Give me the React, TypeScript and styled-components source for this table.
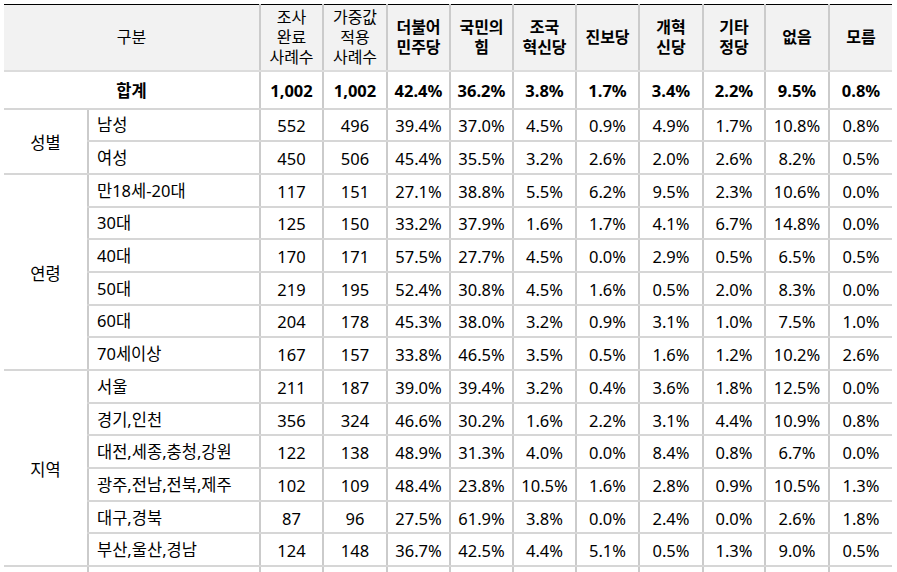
import React from "react";
import styled, { createGlobalStyle } from "styled-components";

const GlobalStyle = createGlobalStyle`
  html, body {
    margin: 0;
    padding: 0;
    background: #ffffff;
  }
  body {
    font-family: "Noto Sans", "Noto Sans CJK KR", sans-serif;
    color: #000000;
  }
`;

const Page = styled.div`
  padding: 4px 5px 0 4px;
`;

const Table = styled.table`
  width: 888px;
  table-layout: fixed;
  border-collapse: collapse;
  border-top: 1px solid #000000;
  font-size: 16.5px;
`;

const HeadRow = styled.tr`
  height: 66px;
  background: #f2f2f2;
`;

const HeadCell = styled.th<{ $bold?: boolean }>`
  font-weight: ${(p) => (p.$bold ? 700 : 400)};
  font-size: 16px;
  line-height: 20px;
  text-align: center;
  padding: 0;
  border-left: 2px solid #cbcbcb;
  border-bottom: 2px solid #dcdcdc;
  &:first-child {
    border-left: none;
  }
`;

const TotalRow = styled.tr`
  height: 38px;
  font-weight: 700;
`;

const BodyRow = styled.tr`
  height: 32.7px;
`;

const GroupCell = styled.td`
  text-align: center;
  padding: 2px 0 0;
  border-bottom: 2px solid #d6d6d6;
`;

const LabelCell = styled.td`
  text-align: left;
  padding: 0 0 1px 8px;
  border-left: 2px solid #cbcbcb;
  border-bottom: 2px solid #d6d6d6;
  white-space: nowrap;
`;

const NumCell = styled.td`
  text-align: center;
  padding: 2px 0 0;
  border-left: 2px solid #cbcbcb;
  border-bottom: 2px solid #d6d6d6;
  white-space: nowrap;
`;

const TotalLabel = styled.td`
  text-align: center;
  padding: 0;
  border-bottom: 2px solid #d6d6d6;
`;

type Row = [string, ...string[]];

const groups: { name: string; rows: Row[] }[] = [
  {
    name: "성별",
    rows: [
      ["남성", "552", "496", "39.4%", "37.0%", "4.5%", "0.9%", "4.9%", "1.7%", "10.8%", "0.8%"],
      ["여성", "450", "506", "45.4%", "35.5%", "3.2%", "2.6%", "2.0%", "2.6%", "8.2%", "0.5%"],
    ],
  },
  {
    name: "연령",
    rows: [
      ["만18세-20대", "117", "151", "27.1%", "38.8%", "5.5%", "6.2%", "9.5%", "2.3%", "10.6%", "0.0%"],
      ["30대", "125", "150", "33.2%", "37.9%", "1.6%", "1.7%", "4.1%", "6.7%", "14.8%", "0.0%"],
      ["40대", "170", "171", "57.5%", "27.7%", "4.5%", "0.0%", "2.9%", "0.5%", "6.5%", "0.5%"],
      ["50대", "219", "195", "52.4%", "30.8%", "4.5%", "1.6%", "0.5%", "2.0%", "8.3%", "0.0%"],
      ["60대", "204", "178", "45.3%", "38.0%", "3.2%", "0.9%", "3.1%", "1.0%", "7.5%", "1.0%"],
      ["70세이상", "167", "157", "33.8%", "46.5%", "3.5%", "0.5%", "1.6%", "1.2%", "10.2%", "2.6%"],
    ],
  },
  {
    name: "지역",
    rows: [
      ["서울", "211", "187", "39.0%", "39.4%", "3.2%", "0.4%", "3.6%", "1.8%", "12.5%", "0.0%"],
      ["경기,인천", "356", "324", "46.6%", "30.2%", "1.6%", "2.2%", "3.1%", "4.4%", "10.9%", "0.8%"],
      ["대전,세종,충청,강원", "122", "138", "48.9%", "31.3%", "4.0%", "0.0%", "8.4%", "0.8%", "6.7%", "0.0%"],
      ["광주,전남,전북,제주", "102", "109", "48.4%", "23.8%", "10.5%", "1.6%", "2.8%", "0.9%", "10.5%", "1.3%"],
      ["대구,경북", "87", "96", "27.5%", "61.9%", "3.8%", "0.0%", "2.4%", "0.0%", "2.6%", "1.8%"],
      ["부산,울산,경남", "124", "148", "36.7%", "42.5%", "4.4%", "5.1%", "0.5%", "1.3%", "9.0%", "0.5%"],
    ],
  },
];

const total = ["1,002", "1,002", "42.4%", "36.2%", "3.8%", "1.7%", "3.4%", "2.2%", "9.5%", "0.8%"];

const widths = [84, 172, 63, 64, 63, 63, 63, 63, 64, 62, 64, 63];

const App = () => {
  return (
    <Page>
      <GlobalStyle />
      <Table>
        <colgroup>
          {widths.map((w, i) => (
            <col key={i} style={{ width: w }} />
          ))}
        </colgroup>
        <thead>
          <HeadRow>
            <HeadCell colSpan={2}>구분</HeadCell>
            <HeadCell>
              조사
              <br />
              완료
              <br />
              사례수
            </HeadCell>
            <HeadCell>
              가중값
              <br />
              적용
              <br />
              사례수
            </HeadCell>
            <HeadCell $bold>
              더불어
              <br />
              민주당
            </HeadCell>
            <HeadCell $bold>
              국민의
              <br />힘
            </HeadCell>
            <HeadCell $bold>
              조국
              <br />
              혁신당
            </HeadCell>
            <HeadCell $bold>진보당</HeadCell>
            <HeadCell $bold>
              개혁
              <br />
              신당
            </HeadCell>
            <HeadCell $bold>
              기타
              <br />
              정당
            </HeadCell>
            <HeadCell $bold>없음</HeadCell>
            <HeadCell $bold>모름</HeadCell>
          </HeadRow>
        </thead>
        <tbody>
          <TotalRow>
            <TotalLabel colSpan={2}>합계</TotalLabel>
            {total.map((v, i) => (
              <NumCell key={i}>{v}</NumCell>
            ))}
          </TotalRow>
          {groups.map((g) =>
            g.rows.map(([label, ...vals], ri) => (
              <BodyRow key={g.name + label}>
                {ri === 0 && <GroupCell rowSpan={g.rows.length}>{g.name}</GroupCell>}
                <LabelCell>{label}</LabelCell>
                {vals.map((v, i) => (
                  <NumCell key={i}>{v}</NumCell>
                ))}
              </BodyRow>
            ))
          )}
          <BodyRow>
            <GroupCell />
            <LabelCell />
            {total.map((_, i) => (
              <NumCell key={i} />
            ))}
          </BodyRow>
        </tbody>
      </Table>
    </Page>
  );
};

export default App;
